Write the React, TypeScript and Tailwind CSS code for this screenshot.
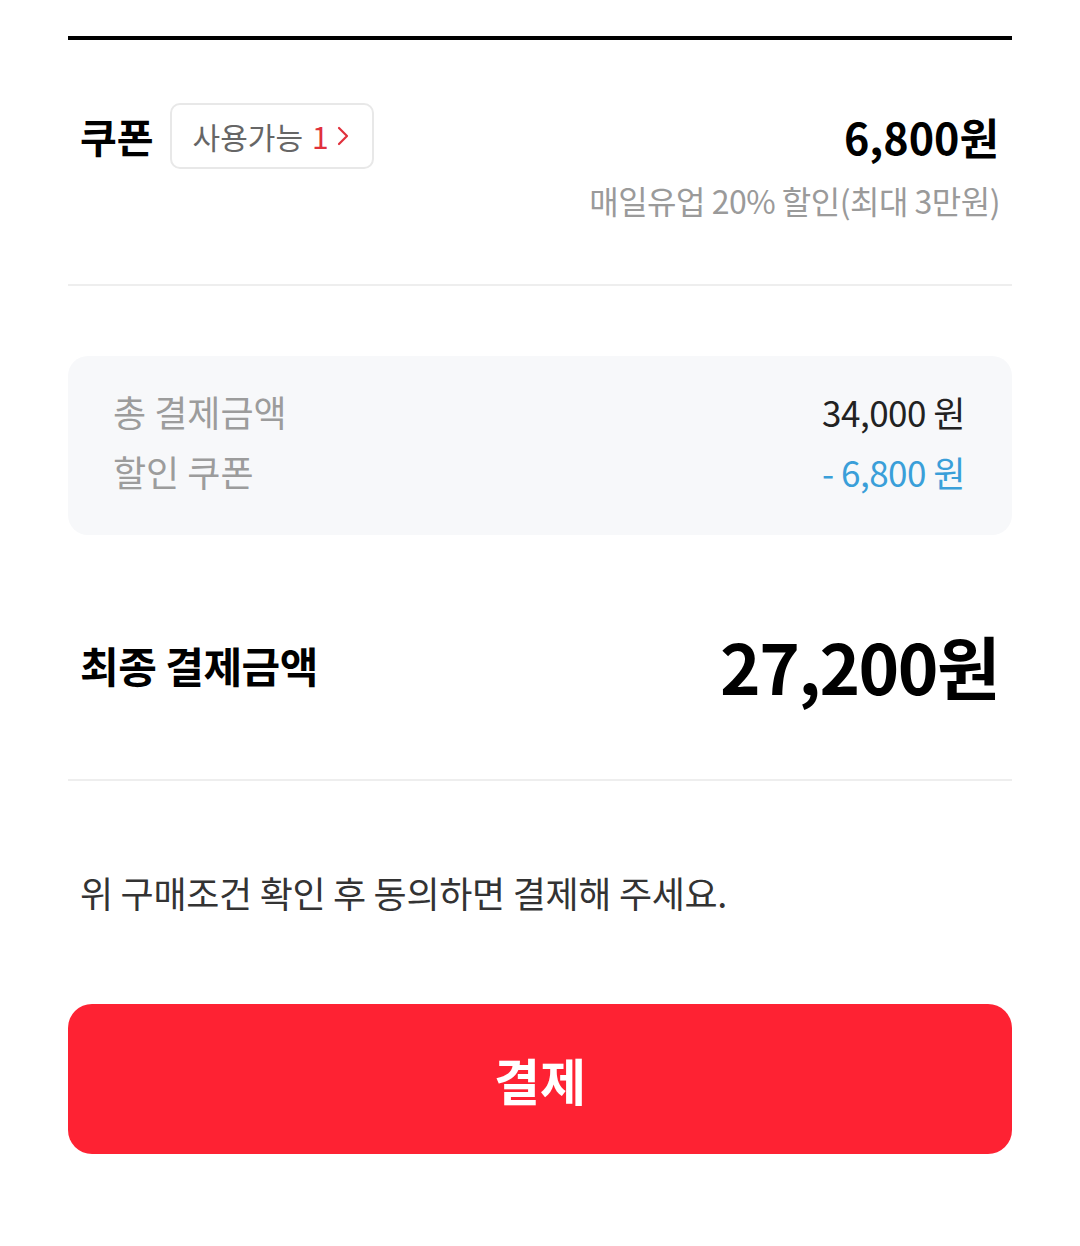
import React from 'react';

const font = { fontFamily: '"Noto Sans CJK KR", "Noto Sans", sans-serif' };

const App: React.FC = () => {
  return (
    <div className="w-[1080px] h-[1246px] bg-white pt-[36px]" style={font}>
      <div className="mx-[68px]">
        {/* top heavy rule */}
        <div className="h-[4px] bg-black" />

        {/* coupon */}
        <div className="mt-[63px] flex items-center justify-between h-[66px]">
          <div className="flex items-center">
            <span className="pl-[12px] text-[40px] font-bold text-black leading-none">쿠폰</span>
            <button className="ml-[16px] h-[66px] w-[204px] border-2 border-[#e8e8e8] rounded-[10px] flex items-center pl-[21px]">
              <span className="text-[30px] text-[#666666] leading-none">사용가능</span>
              <span className="ml-[9px] text-[30px] text-[#e0303c] leading-none">1</span>
              <svg className="ml-[6px] w-[16px] h-[22px]" viewBox="0 0 16 22" fill="none">
                <path d="M4 3l8 8-8 8" stroke="#e0303c" strokeWidth={2.2} strokeLinecap="round" strokeLinejoin="round" />
              </svg>
            </button>
          </div>
          <span className="pr-[13px] text-[43px] font-bold text-black leading-none">6,800원</span>
        </div>
        <div className="mt-[13px] pr-[12px] text-right text-[32px] leading-[36px] text-[#9a9a9a] tracking-[-0.5px]">
          매일유업 20% 할인(최대 3만원)
        </div>

        <div className="mt-[66px] h-[2px] bg-[#eeeeee]" />

        {/* summary box */}
        <div className="mt-[70px] h-[179px] bg-[#f7f8fa] rounded-[20px] pl-[45px] pr-[47px] pt-[35px]">
          <div className="flex justify-between items-center h-[40px]">
            <span className="text-[36px] text-[#9c9c9c] leading-none">총 결제금액</span>
            <span className="text-[35px] text-[#222222] leading-none tracking-[-0.5px]">34,000 원</span>
          </div>
          <div className="mt-[20px] flex justify-between items-center h-[40px]">
            <span className="text-[36px] text-[#9c9c9c] leading-none">할인 쿠폰</span>
            <span className="text-[35px] text-[#3a9fd9] leading-none tracking-[-0.5px]">- 6,800 원</span>
          </div>
        </div>

        {/* final amount */}
        <div className="mt-[90px] flex justify-between items-center h-[80px]">
          <span className="pl-[12px] text-[42px] font-bold text-black leading-none tracking-[-0.5px]">최종 결제금액</span>
          <span className="pr-[13px] text-[69px] font-bold text-black leading-none tracking-[-1.5px]">27,200원</span>
        </div>

        <div className="mt-[74px] h-[2px] bg-[#eeeeee]" />

        <p className="mt-[91px] pl-[12px] text-[36px] leading-[40px] text-[#333333] tracking-[-0.3px]">
          위 구매조건 확인 후 동의하면 결제해 주세요.
        </p>

        <button className="mt-[92px] w-full h-[150px] rounded-[24px] bg-[#fe2233] flex items-center justify-center">
          <span className="text-[50px] font-bold text-white leading-none">결제</span>
        </button>
      </div>
    </div>
  );
};

export default App;
